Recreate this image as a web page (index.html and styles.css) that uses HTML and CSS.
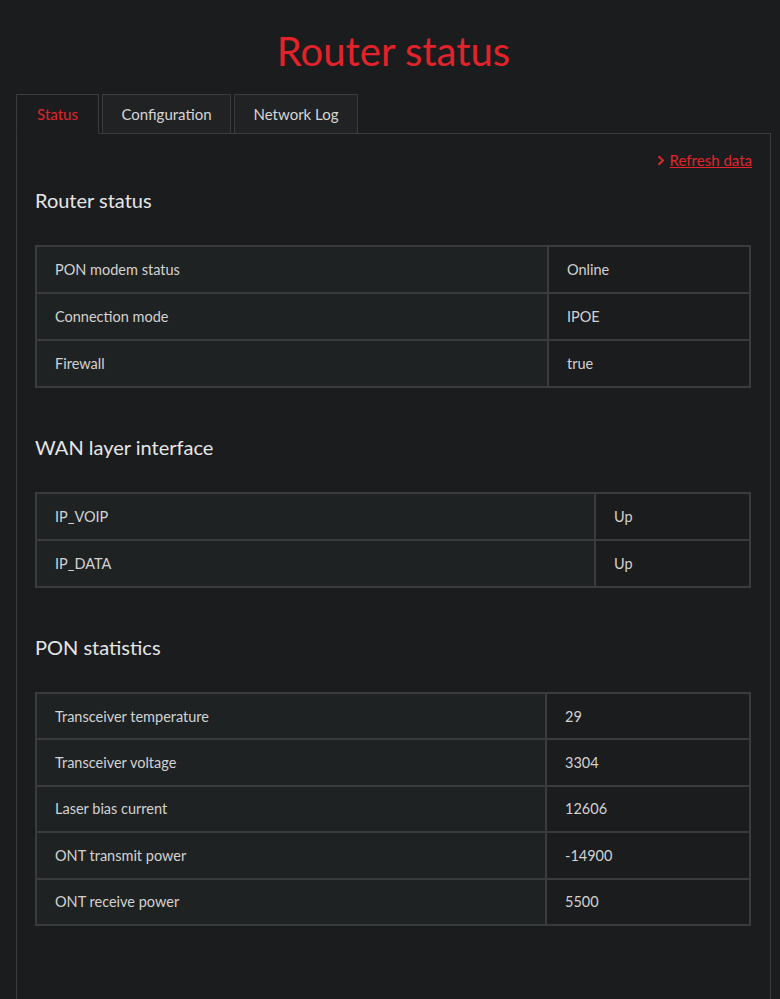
FILE: index.html
```html
<!DOCTYPE html>
<html lang="en">
<head>
<meta charset="utf-8">
<title>Router status</title>
<link rel="stylesheet" href="styles.css">
</head>
<body>
<div class="page">
  <h1 class="title">Router status</h1>
  <div class="tabs">
    <div class="tab active">Status</div>
    <div class="tab">Configuration</div>
    <div class="tab">Network Log</div>
  </div>
  <div class="panel">
    <div class="refresh-row">
      <a class="refresh" href="#"><svg class="chev" width="8" height="11" viewBox="0 0 8 11"><path d="M1.5 1.2 L6 5.5 L1.5 9.8" fill="none" stroke="#e0252b" stroke-width="2"/></svg><span>Refresh data</span></a>
    </div>

    <h2 class="section">Router status</h2>
    <table class="grid t1">
      <tr><td class="k">PON modem status</td><td class="v">Online</td></tr>
      <tr><td class="k">Connection mode</td><td class="v">IPOE</td></tr>
      <tr><td class="k">Firewall</td><td class="v">true</td></tr>
    </table>

    <h2 class="section">WAN layer interface</h2>
    <table class="grid t2">
      <tr><td class="k">IP_VOIP</td><td class="v">Up</td></tr>
      <tr><td class="k">IP_DATA</td><td class="v">Up</td></tr>
    </table>

    <h2 class="section">PON statistics</h2>
    <table class="grid t3">
      <tr><td class="k">Transceiver temperature</td><td class="v">29</td></tr>
      <tr><td class="k">Transceiver voltage</td><td class="v">3304</td></tr>
      <tr><td class="k">Laser bias current</td><td class="v">12606</td></tr>
      <tr><td class="k">ONT transmit power</td><td class="v">-14900</td></tr>
      <tr><td class="k">ONT receive power</td><td class="v">5500</td></tr>
    </table>
  </div>
</div>
</body>
</html>
```

FILE: styles.css
```css
html, body {
  margin: 0;
  padding: 0;
  background: #1b1c1e;
}
body {
  font-family: Lato, "Liberation Sans", sans-serif;
  color: #d0d0d0;
}
.page {
  padding: 0 0 0 16px;
  width: 755px;
  height: 999px;
  overflow: hidden;
}
.title {
  margin: 0;
  padding: 26px 0 18px 0;
  text-align: center;
  font-weight: 400;
  font-size: 40px;
  line-height: 50px;
  color: #e3232a;
}
.tabs {
  display: flex;
  gap: 3px;
  height: 39px;
  position: relative;
  z-index: 1;
}
.tab {
  box-sizing: border-box;
  height: 40px;
  display: flex;
  align-items: center;
  justify-content: center;
  white-space: nowrap;
  font-size: 15px;
  color: #d6d6d6;
  background: #202224;
  border: 1px solid #3a3c3e;
}
.tab.active {
  color: #e3232a;
  background: #1b1c1e;
  border-bottom-color: #1b1c1e;
  width: 83px;
}
.tab:nth-child(2) { width: 129px; }
.tab:nth-child(3) { width: 124px; }
.panel {
  border: 1px solid #3a3c3e;
  border-bottom: none;
  padding: 16px 18px 40px 18px;
  min-height: 820px;
}
.refresh-row {
  display: flex;
  justify-content: flex-end;
  height: 20px;
  align-items: center;
}
.refresh {
  display: flex;
  align-items: center;
  gap: 5px;
  color: #e0252b;
  font-size: 15px;
  text-decoration: underline;
}
.chev { display: block; }
.section {
  margin: 18px 0 33px 0;
  height: 24px;
  font-weight: 400;
  font-size: 20px;
  line-height: 24px;
  color: #e6e6e6;
}
.t1 + .section, .t2 + .section { margin-top: 0; }
.grid {
  width: 716px;
  border-collapse: collapse;
  border: 2px solid #393b3d;
  font-size: 14.5px;
  color: #d2d2d2;
  margin-bottom: 47px;
}
.grid td {
  border: 2px solid #393b3d;
  height: 47px;
  padding: 0 0 0 18px;
  box-sizing: border-box;
}
.grid td.k { background: #1f2223; }
.grid td.v { background: #1b1c1e; }
.t1 .k { width: 512px; }
.t2 .k { width: 559px; }
.t3 .k { width: 510px; }
.t3 td { height: 46.4px; }
```
